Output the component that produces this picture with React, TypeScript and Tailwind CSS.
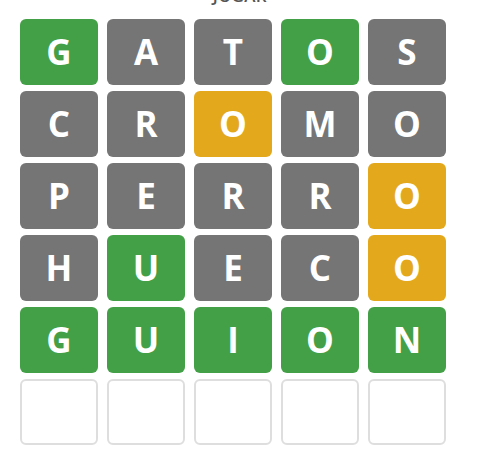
const rows: { l: string; c: "g" | "x" | "y" | "e" }[][] = [
  [
    { l: "G", c: "g" },
    { l: "A", c: "x" },
    { l: "T", c: "x" },
    { l: "O", c: "g" },
    { l: "S", c: "x" },
  ],
  [
    { l: "C", c: "x" },
    { l: "R", c: "x" },
    { l: "O", c: "y" },
    { l: "M", c: "x" },
    { l: "O", c: "x" },
  ],
  [
    { l: "P", c: "x" },
    { l: "E", c: "x" },
    { l: "R", c: "x" },
    { l: "R", c: "x" },
    { l: "O", c: "y" },
  ],
  [
    { l: "H", c: "x" },
    { l: "U", c: "g" },
    { l: "E", c: "x" },
    { l: "C", c: "x" },
    { l: "O", c: "y" },
  ],
  [
    { l: "G", c: "g" },
    { l: "U", c: "g" },
    { l: "I", c: "g" },
    { l: "O", c: "g" },
    { l: "N", c: "g" },
  ],
  [
    { l: "", c: "e" },
    { l: "", c: "e" },
    { l: "", c: "e" },
    { l: "", c: "e" },
    { l: "", c: "e" },
  ],
];

function Tile({ l, c }: { l: string; c: "g" | "x" | "y" | "e" }) {
  const bg =
    c === "g"
      ? "bg-[#43a047]"
      : c === "x"
      ? "bg-[#757575]"
      : c === "y"
      ? "bg-[#e4a81d]"
      : "bg-white border-2 border-[#dedede]";
  return (
    <div
      className={`w-[78px] h-[66px] rounded-[6px] flex items-center justify-center text-white font-bold text-[35px] ${bg}`}
    >
      {l}
    </div>
  );
}

export default function App() {
  return (
    <div
      className="w-[480px] h-[456px] bg-white overflow-hidden"
      style={{ fontFamily: '"Open Sans", "Noto Sans", sans-serif' }}
    >
      <div className="h-[19px] overflow-hidden text-center">
        <div className="text-[#555] text-[17px] font-semibold leading-[18px] -translate-y-[13px] tracking-wide">
          JUGAR
        </div>
      </div>
      <div className="pl-[20px] flex flex-col gap-[6px]">
        {rows.map((row, i) => (
          <div key={i} className="flex gap-[9px]">
            {row.map((t, j) => (
              <Tile key={j} l={t.l} c={t.c} />
            ))}
          </div>
        ))}
      </div>
    </div>
  );
}
